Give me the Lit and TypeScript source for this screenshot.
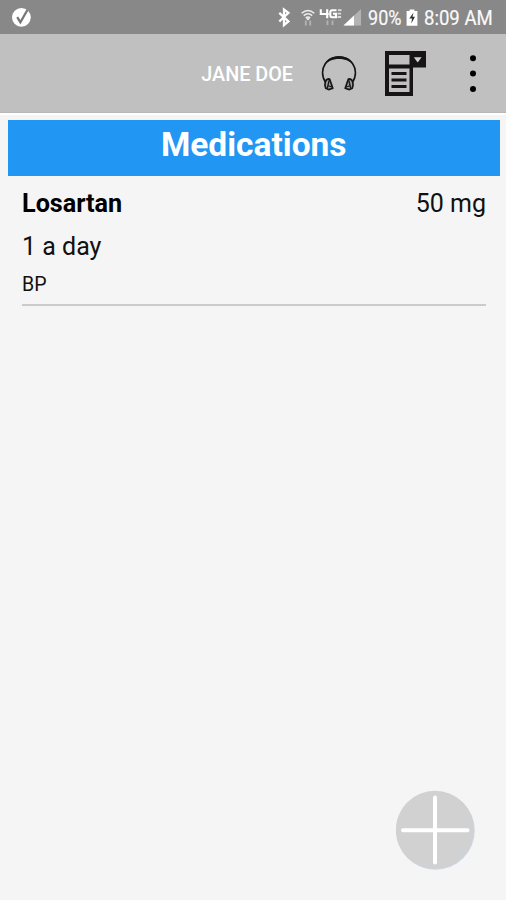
import { LitElement, html, css } from "lit";
import { customElement, property } from "lit/decorators.js";

@customElement("status-bar")
class StatusBar extends LitElement {
  static styles = css`
    :host { display: flex; align-items: center; height: 34px; box-sizing: border-box; padding: 0 13px 0 11px; background: #888; color: #fafafa; }
    svg { display: block; flex: none; }
    .spacer { flex: 1; }
    .level, .clock { flex: none; font-size: 20.5px; height: 34px; line-height: 32px; padding-top: 2px; box-sizing: border-box; white-space: nowrap; transform-origin: 0 50%; -webkit-text-stroke: 0.2px #fafafa; }
    .level { width: 34px; margin-left: 6px; transform: scaleX(0.88); }
    .clock { width: 69px; transform: scaleX(0.905); }
    .battery { margin: 0 6px 0 4px; }
  `;
  render() {
    return html`
      <svg width="22" height="34" viewBox="0 0 22 34">
        <circle cx="10.4" cy="17.3" r="9.4" fill="#fff" />
        <path d="M6.2 17.2L9.4 22.2L16.4 10" fill="none" stroke="#777" stroke-width="2.3" />
        <path d="M15.5 11.5L18.6 6.5" stroke="#888" stroke-width="1.4" />
      </svg>
      <span class="spacer"></span>
      <svg width="86" height="34" viewBox="276 0 86 34">
        <path d="M279.3 12.8L288.4 21.5L284 25V9.6L288.4 12.8L279.3 21.5" fill="none" stroke="#fff" stroke-width="2.3" />
        <g fill="none" stroke="#ececec" stroke-width="1.5">
          <path d="M301.6 13.2Q308 7.7 314.3 13.2" />
          <path d="M303.7 15.6Q308 12 312.2 15.6" />
          <path d="M305.7 17.8Q308 16 310.2 17.8" />
        </g>
        <path d="M306 18.2h4L308 20.4z" fill="#fff" />
        <path d="M305.8 20.5v5M310.2 20.5v5M327.5 20.5v4.5M332.5 20.5v4.5" stroke="#b4b4b4" stroke-width="1.8" />
        <path d="M320.8 9.2v4.8h8M327.2 9.2v9" fill="none" stroke="#fff" stroke-width="2.1" />
        <path d="M336.5 10.2h-4.2q-2 0-2 2v3q0 2 2 2h3.7v-3.4h-3" fill="none" stroke="#fff" stroke-width="2.1" />
        <path d="M338 10.2h3.5M337.6 13.6h3.5M337.6 17h3.5" stroke="#ddd" stroke-width="1.8" />
        <path d="M343.5 25.5L361 9V25.5z" fill="#b3b3b3" />
        <path d="M343.5 25.5L354 15.6V25.5z" fill="#fff" />
      </svg>
      <div class="level">90%</div>
      <svg class="battery" width="12" height="34" viewBox="406 0 12 34">
        <path d="M406.6 11h3V9.4h4.8V11h3v14.7h-10.8z" fill="#fff" />
        <path d="M413.5 12.5L409.3 18.5h2.7L411.3 23.5L415 16.8h-2.5z" fill="#333" />
      </svg>
      <div class="clock">8:09 AM</div>
    `;
  }
}

@customElement("app-bar")
class AppBar extends LitElement {
  @property() patient = "";
  static styles = css`
    :host { display: flex; align-items: center; height: 79px; background: #c0c0c0; border-bottom: 1px solid #b8b8b8; box-sizing: border-box; padding-right: 27px; justify-content: flex-end; }
    svg { display: block; flex: none; }
    .name { color: #fff; font-size: 19.8px; letter-spacing: 0; font-weight: 500; margin-right: 27px; padding-top: 3px; white-space: nowrap; }
    .headphones { margin-right: 27px; }
    .form { margin-right: 40px; }
  `;
  render() {
    return html`
      <span class="name">${this.patient}</span>
      <svg class="headphones" width="38" height="78" viewBox="320 34 38 78">
        <path d="M325.6 82.5C321.2 76 322 68.5 325.2 64C331.5 54.6 346.5 54.6 352.8 64C356 68.5 356.8 76 352.4 82.5" fill="none" stroke="#161616" stroke-width="1.6" />
        <path d="M323.4 66.5C328 52.6 350 52.6 354.6 66.5C348 56.6 330 56.6 323.4 66.5z" fill="#161616" />
        <g stroke="#161616" stroke-width="1.7" fill="#9c9c9c" stroke-linejoin="round">
          <path d="M329.6 79C325.4 78.6 323.9 83.6 325.7 88.2L328.6 89.6L332.8 88.2z" />
          <path d="M348.4 79C352.6 78.6 354.1 83.6 352.3 88.2L349.4 89.6L345.2 88.2z" />
          <path d="M329.3 80L327.2 88.5M327.5 85.5L332 87M348.7 80L350.8 88.5M350.5 85.5L346 87" stroke-width="1.3" />
        </g>
      </svg>
      <svg class="form" width="42" height="78" viewBox="385 34 42 78">
        <path d="M385 51h41v16.5h-13V96h-28z" fill="#171415" />
        <path d="M389 55h20.5v9.5H389zM389 68.5h20.5V92H389z" fill="#c0c0c0" />
        <path d="M391.5 73.5h15M391.5 80h15M391.5 86.5h15" stroke="#171415" stroke-width="3" />
        <path d="M413.8 57.2h7.8L417.7 62.5z" fill="#d0d0d0" />
      </svg>
      <svg width="12" height="78" viewBox="467 34 12 78">
        <circle cx="473" cy="58.2" r="3" /><circle cx="473" cy="73.6" r="3" /><circle cx="473" cy="89.1" r="3" />
      </svg>
    `;
  }
}

@customElement("medication-item")
class MedicationItem extends LitElement {
  @property() name = "";
  @property() dose = "";
  @property() schedule = "";
  @property() reason = "";
  static styles = css`
    :host { display: block; margin: 0 20px 0 22px; padding-top: 9px; height: 130px; box-sizing: border-box; border-bottom: 2px solid #cbcbcb; color: #111; }
    .row { display: flex; justify-content: space-between; font-size: 25px; line-height: 38px; }
    .name { font-weight: 700; font-size: 25.2px; color: #000; }
    .schedule { font-size: 25px; line-height: 47px; }
    .reason { font-size: 19.5px; line-height: 30px; }
  `;
  render() {
    return html`
      <div class="row"><span class="name">${this.name}</span><span class="dose">${this.dose}</span></div>
      <div class="schedule">${this.schedule}</div>
      <div class="reason">${this.reason}</div>
    `;
  }
}

@customElement("app-root")
class AppRoot extends LitElement {
  static styles = css`
    :host { display: block; position: relative; height: 900px; overflow: hidden; background: #f5f5f5; font-family: Roboto, "Liberation Sans", sans-serif; }
    .title { margin: 7px 6.5px 0 8px; height: 56px; box-sizing: border-box; background: #2196f3; color: #fff; font-size: 33.5px; font-weight: 700; line-height: 49px; text-align: center; }
    .add { position: absolute; right: 30px; bottom: 29px; width: 80px; height: 82px; padding: 0; border: 0; background: none; }
    .add svg { display: block; }
    .lip { height: 2px; margin-bottom: -2px; background: #fff; }
  `;
  render() {
    return html`
      <status-bar></status-bar>
      <app-bar patient="JANE DOE"></app-bar>
      <div class="lip"></div>
      <div class="title">Medications</div>
      <medication-item name="Losartan" dose="50 mg" schedule="1 a day" reason="BP"></medication-item>
      <button class="add" aria-label="Add medication">
        <svg width="80" height="82" viewBox="396 789 80 82">
          <circle cx="435.6" cy="830.6" r="39.2" fill="#c9dced" />
          <circle cx="435" cy="830" r="39.2" fill="#d1d1d1" />
          <path d="M403 830.3h64.5M435 797.5v65" stroke="#fff" stroke-width="4" stroke-linecap="round" />
        </svg>
      </button>
    `;
  }
}
